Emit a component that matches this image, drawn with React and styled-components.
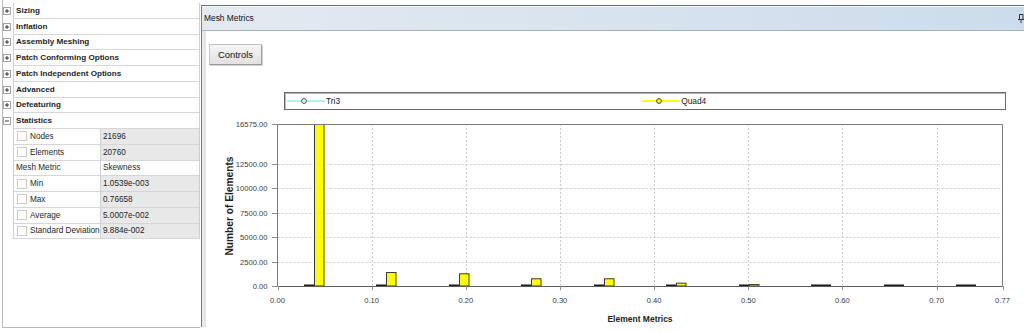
import styled, { createGlobalStyle } from "styled-components";

const GlobalStyle = createGlobalStyle`
	html, body {
		margin: 0;
		padding: 0;
		background: #fff;
	}
	body {
		font-family: "Liberation Sans", Arial, sans-serif;
		color: #1e1e1e;
	}
`;

const groups = [
	"Sizing",
	"Inflation",
	"Assembly Meshing",
	"Patch Conforming Options",
	"Patch Independent Options",
	"Advanced",
	"Defeaturing",
];

const stats = [
	{ label: "Nodes", value: "21696", check: true },
	{ label: "Elements", value: "20760", check: true },
	{ label: "Mesh Metric", value: "Skewness", check: false, editable: true },
	{ label: "Min", value: "1.0539e-003", check: true },
	{ label: "Max", value: "0.76658", check: true },
	{ label: "Average", value: "5.0007e-002", check: true },
	{ label: "Standard Deviation", value: "9.884e-002", check: true },
];

// chart geometry, in page pixels
const PLOT = { left: 276.5, right: 1001.5, top: 124, bottom: 286 };
const Y_MAX = 16575;
const X_MAX = 0.77;
const yTicks = [0, 2500, 5000, 7500, 10000, 12500, 16575];
const xTicks = [0, 0.1, 0.2, 0.3, 0.4, 0.5, 0.6, 0.7, 0.77];
const quad4 = [16575, 1430, 1300, 790, 790, 340, 200, 0, 0, 0];

const Page = styled.div`
	display: flex;
	width: 1024px;
	height: 331px;
	overflow: hidden;
`;

const Tree = styled.div`
	width: 197px;
	height: 324px;
	margin-left: 2px;
	padding-top: 3px;
	border-left: 1px solid #b9b9b9;
	border-bottom: 1px solid #b9b9b9;
	flex-shrink: 0;
`;

const Row = styled.div`
	display: grid;
	grid-template-columns: ${(p) => (p.$stat ? "10px 88px 1fr" : "10px 1fr")};
	height: 15.75px;
	font-size: ${(p) => (p.$stat ? "8.2px" : "8.1px")};
	font-weight: ${(p) => (p.$stat ? 400 : 700)};
	line-height: 15px;
`;

const Gutter = styled.div`
	display: flex;
	align-items: center;
`;

const Cell = styled.div`
	display: flex;
	align-items: center;
	gap: 3px;
	padding-left: 2px;
	border-left: ${(p) => (p.$first ? "1px solid #cfcfcf" : "none")};
	border-right: 1px solid #cfcfcf;
	border-bottom: 1px solid #d6d6d6;
	background: ${(p) => (p.$grey ? "#e8e8e8" : "#fff")};
	white-space: nowrap;
	overflow: hidden;
`;

const Check = styled.span`
	width: 8px;
	height: 8px;
	margin-left: 1px;
	border: 1px solid #c9c9c9;
	background: #fff;
	flex-shrink: 0;
`;

const Pane = styled.div`
	flex: 1;
	margin-top: 5px;
	margin-bottom: 4px;
	margin-left: 1px;
	border-top: 1px solid #707070;
	border-left: 1px solid #7d7d7d;
	display: flex;
	flex-direction: column;
	min-width: 0;
`;

const TitleBar = styled.div`
	display: flex;
	align-items: center;
	justify-content: space-between;
	height: 24px;
	padding-left: 2px;
	background: linear-gradient(to right, #e3eaf1, #ccdcec);
	border-bottom: 1px solid #a3b0bd;
	box-shadow: inset 0 1px 0 #f4f7fa;
	font-size: 8.4px;
	color: #111;
`;

const Body = styled.div`
	flex: 1;
	border-left: 4px solid #e8e8e8;
	padding: 13px 0 0 3px;
	display: flex;
	flex-direction: column;
	align-items: flex-start;
	min-height: 0;
`;

const Button = styled.button`
	width: 53px;
	height: 21px;
	padding: 0;
	font-family: "Liberation Sans", Arial, sans-serif;
	font-size: 9.4px;
	color: #111;
	background: linear-gradient(#f5f5f5, #e1e1e1);
	border: 1px solid #c4c4c4;
	border-right-color: #a2a2a2;
	border-bottom-color: #9a9a9a;
	box-shadow: 1px 1px 0 #d0d0d0;
	border-radius: 1px;
`;

const Legend = styled.div`
	display: flex;
	align-items: center;
	width: 720px;
	height: 16px;
	margin-top: 27px;
	margin-left: 75px;
	border: 1px solid #6a6a6a;
	box-shadow: inset 1px 1px 0 #b5b5b5;
	font-size: 8.4px;
	color: #222;
`;

const LegendItem = styled.div`
	display: flex;
	align-items: center;
	gap: 1px;
	margin-left: ${(p) => p.$offset}px;
`;

const ChartSvg = styled.svg`
	display: block;
	margin-left: -3px;
	margin-top: 1px;
	font-family: "Liberation Sans", Arial, sans-serif;
`;

function Expander({ open }) {
	return (
		<svg width="8" height="8" viewBox="0 0 8 8">
			<rect x="0.5" y="0.5" width="7" height="7" fill="#fff" stroke="#a3a3a3" />
			<line x1="2" y1="4" x2="6" y2="4" stroke="#333" />
			{!open && <line x1="4" y1="2" x2="4" y2="6" stroke="#333" />}
		</svg>
	);
}

function LegendMark({ color, marker, stroke }) {
	return (
		<svg width="38" height="8" viewBox="0 0 38 8">
			<line x1="0" y1="4" x2="38" y2="4" stroke={color} strokeWidth="2" />
			<circle cx="17" cy="4" r="2.4" fill={marker} stroke={stroke} strokeWidth="1" />
		</svg>
	);
}

const xPos = (v) => PLOT.left + (v / X_MAX) * (PLOT.right - PLOT.left);
const yPos = (v) => PLOT.bottom - (v / Y_MAX) * (PLOT.bottom - PLOT.top);

function Histogram() {
	const binW = (PLOT.right - PLOT.left) / 10;
	return (
		<ChartSvg width="819" height="216" viewBox="205 111 819 216">
			{/* grid */}
			{yTicks.slice(1, -1).map((t) => (
				<line key={"gy" + t} x1={PLOT.left} x2={PLOT.right} y1={Math.round(yPos(t)) + 0.5} y2={Math.round(yPos(t)) + 0.5}
					stroke="#cacaca" strokeDasharray="2 2" />
			))}
			{xTicks.slice(1, -1).map((t) => (
				<line key={"gx" + t} y1={PLOT.top} y2={PLOT.bottom} x1={Math.round(xPos(t)) + 0.5} x2={Math.round(xPos(t)) + 0.5}
					stroke="#cacaca" strokeDasharray="2 2" />
			))}

			{/* bars */}
			{quad4.map((v, i) => {
				const c = Math.round(PLOT.left + binW * (i + 0.5));
				const top = yPos(v);
				return (
					<g key={i}>
						<rect x={c - 10} y={284.5} width={10} height={1.5} fill="#1c1c1c" />
						{v > 0 ? (
							<rect x={c + 0.5} y={top + 0.5} width={9.5} height={PLOT.bottom - top - 0.5}
								fill="#ffff00" stroke="#3d3d1e" strokeWidth="1" />
						) : (
							<rect x={c} y={284.5} width={10} height={1.5} fill="#1c1c1c" />
						)}
					</g>
				);
			})}

			{/* frame */}
			<path d={`M${PLOT.left} ${PLOT.bottom} V${PLOT.top + 0.5} H${PLOT.right} V${PLOT.bottom}`}
				fill="none" stroke="#7b7b7b" />
			<line x1={PLOT.left} x2={PLOT.right} y1={PLOT.bottom + 0.5} y2={PLOT.bottom + 0.5} stroke="#5c5c5c" />

			{/* y axis */}
			{yTicks.map((t) => (
				<g key={"y" + t}>
					<line x1={271} x2={PLOT.left} y1={Math.round(yPos(t)) + 0.5} y2={Math.round(yPos(t)) + 0.5} stroke="#8a8a8a" />
					<text x={266.5} y={yPos(t) + 1} fontSize="7.6" fill="#3a3a3a" textAnchor="end" dominantBaseline="middle">
						{t.toFixed(2)}
					</text>
				</g>
			))}

			{/* x axis */}
			{xTicks.map((t) => (
				<g key={"x" + t}>
					<line y1={PLOT.bottom} y2={PLOT.bottom + 4} x1={Math.round(xPos(t)) + 0.5} x2={Math.round(xPos(t)) + 0.5} stroke="#8a8a8a" />
					<text x={xPos(t)} y={301} fontSize="7.6" fill="#3a3a3a" textAnchor="middle" dominantBaseline="middle">
						{t.toFixed(2)}
					</text>
				</g>
			))}

			<text x={229} y={206} fontSize="10.2" fontWeight="700" fill="#1e1e1e" textAnchor="middle"
				dominantBaseline="middle" transform="rotate(-90 229 206)">
				Number of Elements
			</text>
			<text x={639} y={320} fontSize="8.5" fontWeight="700" fill="#1e1e1e" textAnchor="middle" dominantBaseline="middle">
				Element Metrics
			</text>
		</ChartSvg>
	);
}

export default function App() {
	return (
		<>
			<GlobalStyle />
			<Page>
				<Tree>
					{groups.map((g) => (
						<Row key={g}>
							<Gutter><Expander /></Gutter>
							<Cell $first>{g}</Cell>
						</Row>
					))}
					<Row>
						<Gutter><Expander open /></Gutter>
						<Cell $first>Statistics</Cell>
					</Row>
					{stats.map((s) => (
						<Row key={s.label} $stat>
							<div />
							<Cell $first>
								{s.check && <Check />}
								{s.label}
							</Cell>
							<Cell $grey={!s.editable}>{s.value}</Cell>
						</Row>
					))}
				</Tree>

				<Pane>
					<TitleBar>
						<span>Mesh Metrics</span>
						<svg width="6" height="10" viewBox="0 0 6 10">
							<path d="M1.5 1.5 H5 V6.5 H1.5 Z M0 6.5 H6 M3 6.5 V10" fill="none" stroke="#333" />
						</svg>
					</TitleBar>
					<Body>
						<Button>Controls</Button>
						<Legend>
							<LegendItem $offset={2}>
								<LegendMark color="#b4f0f0" marker="#eaffff" stroke="#2f5555" />
								<span>Tri3</span>
							</LegendItem>
							<LegendItem $offset={302}>
								<LegendMark color="#ffff00" marker="#ffff00" stroke="#444422" />
								<span>Quad4</span>
							</LegendItem>
						</Legend>
						<Histogram />
					</Body>
				</Pane>
			</Page>
		</>
	);
}
